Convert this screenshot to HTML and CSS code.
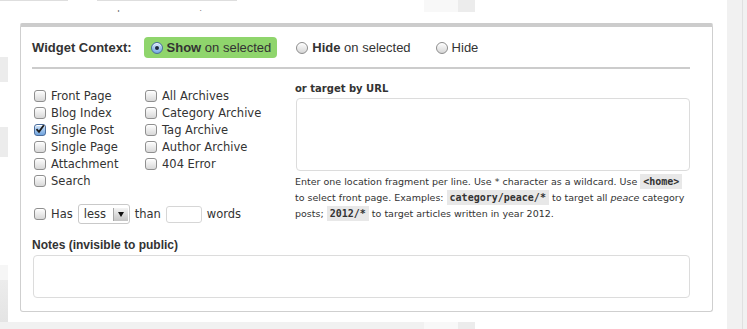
FILE: index.html
```html
<!DOCTYPE html>
<html lang="en">
<head>
  <meta charset="UTF-8" />
  <title>Widget Context</title>
  <link rel="stylesheet" href="styles.css">
</head>
<body>

  <div class="screen">

    <div class="top-edge">
      <span class="tab tab-a"></span>
      <span class="tab tab-b">
        <span class="cut"><span class="cut-text">Inspired to twitter, share on facebook and WordPress</span></span>
      </span>
      <span class="col-light"></span>
      <span class="col-dark"></span>
    </div>

    <div class="left-edge">
      <span class="edge-block b1"></span>
      <span class="edge-block b2"></span>
      <span class="edge-block b3"></span>
      <span class="edge-block b4"></span>
    </div>

    <div class="overlay">
      <div class="panel">

        <div class="context-row">
          <span class="context-label">Widget Context:</span>
          <label class="mode mode-on"><span class="radio checked"></span><b>Show</b>&nbsp;on selected</label>
          <label class="mode"><span class="radio"></span><b>Hide</b>&nbsp;on selected</label>
          <label class="mode"><span class="radio"></span><span class="mode-text">Hide</span></label>
        </div>

        <div class="rule"></div>

        <div class="rules">
          <div class="checks">
            <div class="check-cols">
              <ul class="check-list">
                <li><span class="box"></span>Front Page</li>
                <li><span class="box"></span>Blog Index</li>
                <li>
                  <span class="box checked">
                    <svg width="10" height="10" viewBox="0 0 10 10"><path d="M1.5 5.2 L4 7.8 L8.8 1.2" fill="none" stroke="#1b1b1b" stroke-width="1.8"/></svg>
                  </span>Single Post
                </li>
                <li><span class="box"></span>Single Page</li>
                <li><span class="box"></span>Attachment</li>
                <li><span class="box"></span>Search</li>
              </ul>
              <ul class="check-list">
                <li><span class="box"></span>All Archives</li>
                <li><span class="box"></span>Category Archive</li>
                <li><span class="box"></span>Tag Archive</li>
                <li><span class="box"></span>Author Archive</li>
                <li><span class="box"></span>404 Error</li>
              </ul>
            </div>

            <div class="word-count">
              <span class="box"></span>
              <span>Has</span>
              <span class="select">less<span class="select-arrow"></span></span>
              <span>than</span>
              <span class="number"></span>
              <span>words</span>
            </div>
          </div>

          <div class="url-target">
            <div class="field-title">or target by URL</div>
            <textarea class="url-box"></textarea>
            <p class="help">Enter one location fragment per line. Use * character as a wildcard. Use <code>&lt;home&gt;</code> to select front page. Examples: <code>category/peace/*</code> to target all <em>peace</em> category posts; <code>2012/*</code> to target articles written in year 2012.</p>
          </div>
        </div>

        <div class="notes-title">Notes (invisible to public)</div>
        <textarea class="notes-box"></textarea>

      </div>
    </div>

    <div class="bottom-edge">
      <span class="floor"></span>
      <span class="col-light"></span>
      <span class="col-dark"></span>
    </div>

    <div class="right-edge"><span class="right-line"></span></div>

  </div>

</body>
</html>
```

FILE: styles.css
```css
body {
  margin: 0;
  background-color: #fff;
  font-family: 'DejaVu Sans', sans-serif;
  color: #333;
}

.screen {
  display: grid;
  grid-template-columns: 8px 719px 20px;
  grid-template-rows: 12px 310px 7px;
  width: 747px;
  height: 329px;
  overflow: hidden;
}

/* page underneath the widget */

.top-edge {
  grid-column: 1 / 3;
  grid-row: 1;
  display: flex;
}

.tab {
  height: 11px;
  border-top: 1px solid #dedede;
}

.tab-a {
  width: 68px;
}

.tab-b {
  width: 140px;
  margin-left: 29px;
  margin-right: 187px;
}

.cut {
  display: block;
  height: 2px;
  margin: 9px 0 0 4px;
  overflow: hidden;
}

.cut-text {
  display: block;
  margin-top: -9px;
  font-size: 11px;
  line-height: 11px;
  white-space: nowrap;
  color: #777;
}

.col-light {
  width: 34px;
  background-color: #f8f8f8;
}

.col-dark {
  width: 17px;
  background-color: #ececec;
}

.left-edge {
  grid-column: 1;
  grid-row: 2;
  display: flex;
  flex-direction: column;
}

.edge-block {
  display: block;
  background-color: #ececec;
}

.b1 {
  margin-top: 45px;
  height: 25px;
}

.b2 {
  margin-top: 45px;
  height: 30px;
}

.b3 {
  margin-top: 108px;
  height: 15px;
  background-color: #f6f6f6;
}

.b4 {
  height: 42px;
  background: linear-gradient(#ececec, #e4e4e4);
}

.bottom-edge {
  grid-column: 1 / 3;
  grid-row: 3;
  display: flex;
}

.floor {
  width: 424px;
  background-color: #f1f1f1;
}

.right-edge {
  grid-column: 3;
  grid-row: 1 / 4;
  background-color: #f1f1f1;
}

.right-line {
  display: block;
  width: 15px;
  height: 100%;
  border-right: 1px solid #e0e0e0;
}

/* widget */

.overlay {
  grid-column: 2;
  grid-row: 2;
  background-color: #fff;
  border-radius: 0 0 6px 6px;
  padding: 11px 14px 10px 12px;
}

.panel {
  height: 100%;
  box-sizing: border-box;
  border: 1px solid #cfcfcf;
  border-top: 4px solid #cccccc;
  border-radius: 2px 2px 3px 3px;
  padding: 0 22px 13px 11px;
}

.context-row {
  display: flex;
  align-items: center;
  gap: 12px;
  height: 21px;
  margin-top: 10px;
  font-family: 'Liberation Sans', sans-serif;
  font-size: 13px;
  color: #333;
}

.context-label {
  font-weight: bold;
}

.mode {
  display: flex;
  align-items: center;
  height: 21px;
  padding: 0 6px 0 7px;
  border-radius: 4px;
}

.mode b,
.mode-text {
  margin-left: 4px;
}

.mode-on {
  background-color: #8fd56c;
}

.radio {
  width: 10px;
  height: 10px;
  border: 1px solid #8c8c8c;
  border-radius: 50%;
  background: linear-gradient(#fdfdfd, #d6d6d6);
  box-shadow: inset 0 1px 1px #fff;
  display: flex;
  align-items: center;
  justify-content: center;
}

.radio.checked {
  border-color: #4d6f9c;
  background: radial-gradient(circle at 50% 35%, #dcecfc, #7aaee6 70%, #5b8fcf);
}

.radio.checked::after {
  content: "";
  width: 4px;
  height: 4px;
  border-radius: 50%;
  background-color: #1d2a3c;
}

.rule {
  height: 2px;
  margin-top: 9px;
  background-color: #cccccc;
}

.rules {
  display: flex;
  margin-top: 14px;
}

.checks {
  width: 263px;
  font-size: 11.5px;
}

.check-cols {
  display: flex;
  margin-top: 4px;
}

.check-list {
  list-style: none;
  margin: 0;
  padding: 0;
  width: 111px;
}

.check-list li {
  display: flex;
  align-items: center;
  height: 17px;
  gap: 5px;
  padding-left: 2px;
  white-space: nowrap;
}

.box {
  width: 10px;
  height: 10px;
  border: 1px solid #8f8f8f;
  border-radius: 3px;
  background: linear-gradient(#fefefe, #d8d8d8);
  box-shadow: inset 0 1px 0 #fff;
  display: flex;
  align-items: center;
  justify-content: center;
  flex-shrink: 0;
}

.box.checked {
  border-color: #4b6d9c;
  background: linear-gradient(#d3e6fa, #6fa3dd);
}

.box svg {
  margin-top: -1px;
}

.word-count {
  display: flex;
  align-items: center;
  gap: 5px;
  height: 20px;
  margin-top: 15px;
  padding-left: 2px;
}

.select {
  display: flex;
  align-items: center;
  width: 52px;
  height: 20px;
  box-sizing: border-box;
  padding: 0 1px 0 5px;
  border: 1px solid #c9c9c9;
  border-radius: 3px;
  background-color: #fff;
}

.select-arrow {
  margin-left: auto;
  width: 14px;
  height: 13px;
  border-left: 1px solid #a8a8a8;
  background: linear-gradient(#f4f4f4, #c4c4c4);
  display: flex;
  align-items: center;
  justify-content: center;
}

.select-arrow::after {
  content: "";
  border-left: 3.5px solid transparent;
  border-right: 3.5px solid transparent;
  border-top: 5px solid #111;
  margin-top: 1px;
}

.number {
  width: 36px;
  height: 17px;
  box-sizing: border-box;
  border: 1px solid #d6d6d6;
  border-radius: 3px;
}

.url-target {
  width: 395px;
}

.field-title {
  font-size: 10px;
  font-weight: bold;
  line-height: 12px;
  margin-bottom: 3px;
}

textarea {
  display: block;
  box-sizing: border-box;
  margin: 0 0 0 1px;
  border: 1px solid #dcdcdc;
  border-radius: 4px;
  background-color: #fff;
  resize: none;
  font-family: inherit;
}

.url-box {
  width: 394px;
  height: 73px;
}

.help {
  margin: 3px 0 0;
  font-size: 9.5px;
  line-height: 16px;
  color: #333;
}

.help code {
  display: inline-block;
  font-family: 'DejaVu Sans Mono', monospace;
  font-weight: bold;
  font-size: 10px;
  line-height: 15px;
  background-color: #e8e8e8;
  padding: 0 3px;
}

.notes-title {
  margin-top: 14px;
  font-family: 'Liberation Sans', sans-serif;
  font-size: 12px;
  font-weight: bold;
  line-height: 14px;
}

.notes-box {
  width: 657px;
  height: 43px;
  margin-top: 3px;
}
```
